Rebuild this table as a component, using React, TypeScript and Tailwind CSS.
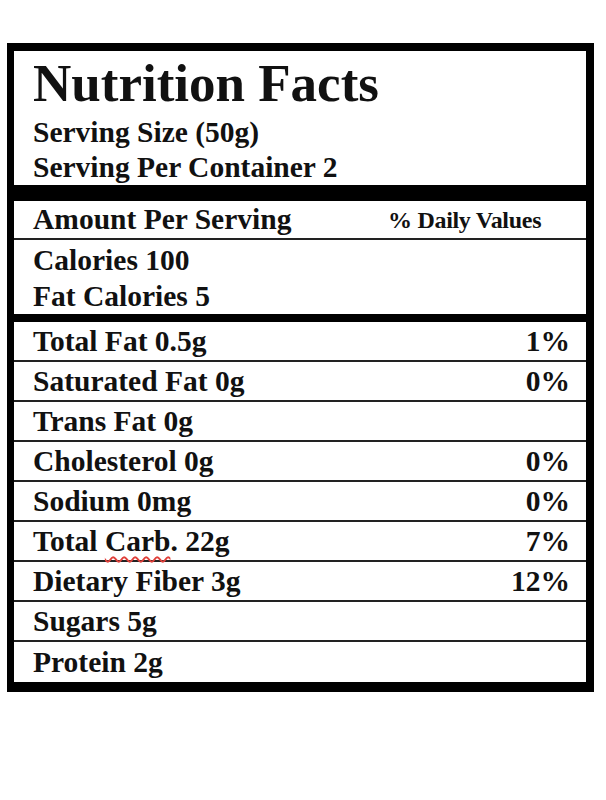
import React from "react";

const rows: { label: React.ReactNode; pct?: string }[] = [
  { label: "Total Fat 0.5g", pct: "1%" },
  { label: "Saturated Fat 0g", pct: "0%" },
  { label: "Trans Fat 0g" },
  { label: "Cholesterol 0g", pct: "0%" },
  { label: "Sodium 0mg", pct: "0%" },
  {
    label: (
      <>
        Total{" "}
        <span className="underline decoration-wavy decoration-[#e0403a] decoration-[1.5px] underline-offset-[5px]">
          Carb
        </span>
        . 22g
      </>
    ),
    pct: "7%",
  },
  { label: "Dietary Fiber 3g", pct: "12%" },
  { label: "Sugars 5g" },
  { label: "Protein 2g" },
];

export default function App() {
  return (
    <div
      className="w-[606px] h-[800px] bg-white pt-[43px] pl-[7px] text-[#111]"
      style={{ fontFamily: '"Liberation Serif", "Times New Roman", serif' }}
    >
      <div className="w-[587px] border-t-[8px] border-l-[7px] border-r-[8px] border-b-[10px] border-black font-bold">
        <div className="h-[134px] pl-[19px] pt-[6px]">
          <div className="text-[53px] leading-none">Nutrition Facts</div>
          <div className="mt-[5px] text-[29.5px] leading-[35px]">Serving Size (50g)</div>
          <div className="text-[29.5px] leading-[35px]">Serving Per Container 2</div>
        </div>
        <div className="h-[16px] bg-black" />
        <div className="h-[39px] flex items-center pl-[19px] border-b-2 border-[#222] text-[29.5px] leading-none">
          <span className="w-[355px]">Amount Per Serving</span>
          <span className="text-[24px] tracking-[-0.3px]">% Daily Values</span>
        </div>
        <div className="h-[74px] pl-[19px] pt-[2px] text-[29.5px] leading-[36px]">
          <div>Calories 100</div>
          <div>Fat Calories 5</div>
        </div>
        <div className="h-[8px] bg-black" />
        <div className="flex flex-col">
          {rows.map((r, i) => (
            <div
              key={i}
              className={`flex items-center justify-between pl-[19px] pr-[16px] text-[29.5px] leading-[38px] ${
                i < rows.length - 1 ? "h-[40px] border-b-2 border-[#222]" : "h-[40px]"
              }`}
            >
              <span>{r.label}</span>
              {r.pct && <span>{r.pct}</span>}
            </div>
          ))}
        </div>
      </div>
    </div>
  );
}
